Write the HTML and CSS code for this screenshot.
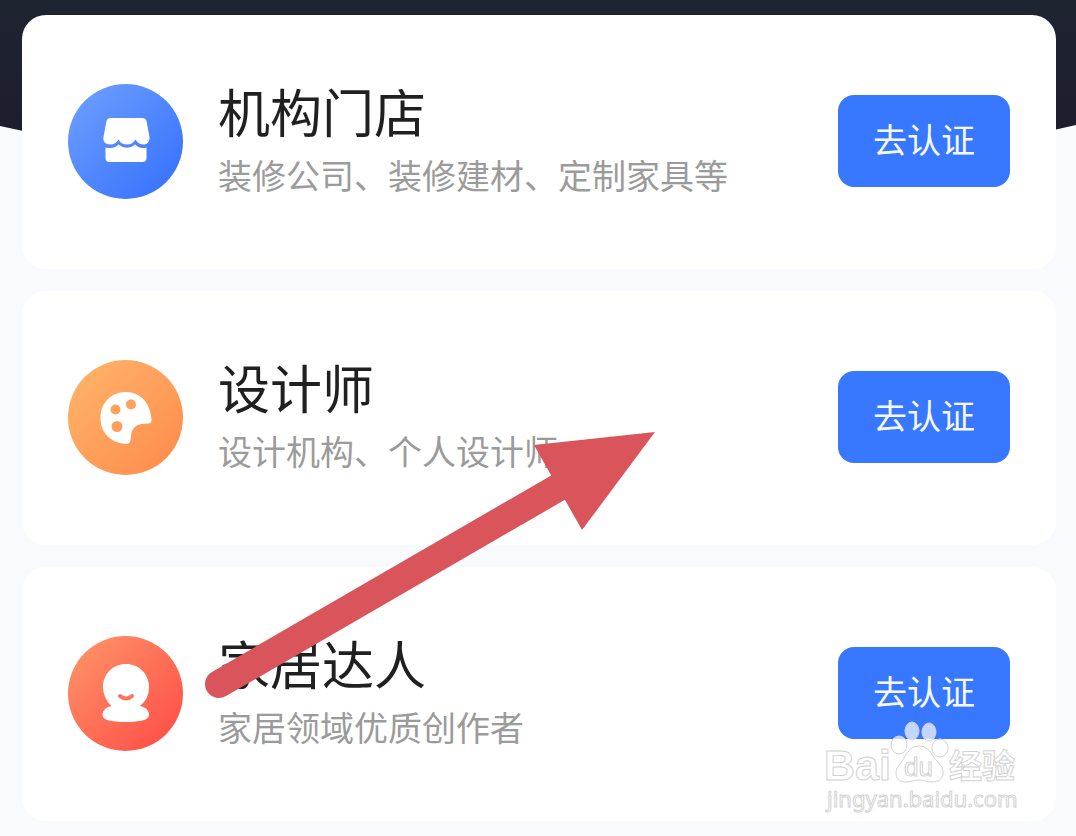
FILE: index.html
```html
<!DOCTYPE html>
<html lang="zh-CN">
<head>
  <meta charset="UTF-8" />
  <meta name="viewport" content="width=device-width, initial-scale=1" />
  <title>选择认证类型</title>
  <link rel="stylesheet" href="styles.css">
</head>
<body>
  <svg class="hero" viewBox="0 0 1076 190" preserveAspectRatio="none" aria-hidden="true">
    <defs>
      <linearGradient id="hero-bg" x1="0" y1="0" x2="0" y2="1">
        <stop offset="0" stop-color="#1f2431" />
        <stop offset="0.7" stop-color="#1d1e2d" />
      </linearGradient>
    </defs>
    <path d="M0 0V126Q538 250 1076 125V0Z" fill="url(#hero-bg)" />
  </svg>

  <main class="lista">
    <section class="card">
      <svg class="icon" viewBox="0 0 115 115" aria-hidden="true">
        <defs>
          <linearGradient id="azul" x1="0" y1="0" x2="1" y2="1">
            <stop offset="0.1" stop-color="#6a9cff" />
            <stop offset="0.9" stop-color="#3873fc" />
          </linearGradient>
        </defs>
        <circle cx="57.5" cy="57.5" r="57.5" fill="url(#azul)" />
        <path fill="#fff" d="M42.5 34H74.5Q77.500 34 78.500 37L81.500 53C82 58 79 60.500 75.500 60.500Q70.500 60.500 67.500 55.500Q64.500 60.500 59 60.500Q53 60.500 50.500 55.500Q47.500 60.500 42.500 60.500C37.500 60.500 34.500 57.500 35.500 53L38.500 37Q39.500 34 42.500 34Z" />
        <path fill="#fff" d="M37.500 63.500Q46 65.500 50.500 60.500Q58.500 67 67.500 60.500Q71.500 65.500 78.500 63.500V74Q78.500 78 74.500 78H41.500Q37.500 78 37.500 74Z" />
      </svg>
      <div class="info">
        <h2>机构门店</h2>
        <p>装修公司、装修建材、定制家具等</p>
      </div>
      <button type="button">去认证</button>
    </section>

    <section class="card">
      <svg class="icon" viewBox="0 0 115 115" aria-hidden="true">
        <defs>
          <linearGradient id="laranja" x1="0" y1="0" x2="1" y2="1">
            <stop offset="0.1" stop-color="#ffb168" />
            <stop offset="0.9" stop-color="#ff8e4e" />
          </linearGradient>
        </defs>
        <circle cx="57.5" cy="57.5" r="57.5" fill="url(#laranja)" />
        <path fill="#fff" fill-rule="evenodd" d="M58 32C73 32 83 44 83.500 60Q83.500 63.500 80 63.500C70 63.500 64 66 63 76L62.500 80Q62 84 58 84C43 83 32.500 73 32.500 58C32.500 43 43 32 58 32ZM42.500 49.500a5 5 0 1 0 10 0a5 5 0 1 0 -10 0ZM58 44.500a5 5 0 1 0 10 0a5 5 0 1 0 -10 0ZM43.500 66.500a5.500 5.500 0 1 0 11 0a5.500 5.500 0 1 0 -11 0Z" />
      </svg>
      <div class="info">
        <h2>设计师</h2>
        <p>设计机构、个人设计师</p>
      </div>
      <button type="button">去认证</button>
    </section>

    <section class="card">
      <svg class="icon" viewBox="0 0 115 115" aria-hidden="true">
        <defs>
          <linearGradient id="vermelho" x1="0" y1="0" x2="1" y2="1">
            <stop offset="0.1" stop-color="#ff8f66" />
            <stop offset="0.9" stop-color="#ff5148" />
          </linearGradient>
        </defs>
        <circle cx="57.5" cy="57.5" r="57.5" fill="url(#vermelho)" />
        <path fill="#fff" d="M58 28C71 28 81 38 81 51Q81 63 72 70Q81 72 81 79C81 84 72 86 58 86C43 86 34.500 84 34.500 79Q34.500 72 43.500 70Q35 62 35 51C35 38 45 28 58 28Z" />
        <path fill="none" stroke="#ff7159" stroke-width="4" stroke-linecap="round" d="M52 60Q58 65 64 60" />
      </svg>
      <div class="info">
        <h2>家居达人</h2>
        <p>家居领域优质创作者</p>
      </div>
      <button type="button">去认证</button>
    </section>
  </main>

  <svg class="seta" viewBox="200 425 460 280" aria-hidden="true">
    <path d="M219 684L566 483" fill="none" stroke="#da555b" stroke-width="28" stroke-linecap="round" />
    <path d="M655 432L582 530L534 445Z" fill="#da555b" />
  </svg>

  <svg class="marca" viewBox="820 715 204 100" role="img" aria-label="Baidu 经验">
    <g class="contorno">
      <text class="bai" x="824" y="780">Bai</text>
      <ellipse cx="899" cy="745" rx="8" ry="9" />
      <ellipse cx="912" cy="731" rx="7" ry="9" />
      <ellipse cx="929" cy="732" rx="7" ry="9" />
      <ellipse cx="940" cy="748" rx="8" ry="9" />
      <path d="M919 746C926 746 930 751 933 756C937 762 944 766 943 774C942 780 938 782 932 782C925 782 925 780 919 780C913 780 911 782 905 782C899 782 896 778 896 773C896 766 902 763 905 756C908 751 912 746 919 746Z" />
      <text class="du" x="904" y="776">du</text>
      <text class="jingyan" x="949" y="778">经验</text>
      <text class="site" x="827" y="807">jingyan.baidu.com</text>
    </g>
  </svg>
</body>
</html>
```

FILE: styles.css
```css
:root {
  --bg: #f9fafd;
  --card: #ffffff;
  --text: #202020;
  --muted: #9b9b9b;
  --button-bg: #3877ff;
  --button-text: #f4faff;
}

* {
  box-sizing: border-box;
}

body {
  position: relative;
  margin: 0;
  min-height: 100vh;
  background-color: var(--bg);
  color: var(--text);
  font-family: "Noto Sans CJK SC", sans-serif;
}

h2,
p {
  margin: 0;
  font-weight: 400;
}

.hero {
  position: absolute;
  top: 0;
  left: 0;
  width: 100%;
  height: 190px;
}

.lista {
  position: relative;
  display: flex;
  flex-direction: column;
  gap: 22px;
  padding: 15px 20px 15px 22px;
}

.card {
  display: flex;
  align-items: center;
  gap: 35px;
  padding: 62px 46px 64px;
  background-color: var(--card);
  border-radius: 24px;
}

.icon {
  flex: none;
  width: 115px;
  height: 115px;
}

.info {
  flex: 1;
  display: flex;
  flex-direction: column;
  gap: 6px;
  padding-bottom: 6px;
}

.info h2 {
  font-size: 52px;
  line-height: 68px;
}

.info p {
  font-size: 34px;
  line-height: 48px;
  color: var(--muted);
}

button {
  flex: none;
  padding: 20px 35px 24px;
  border: none;
  border-radius: 16px;
  background-color: var(--button-bg);
  color: var(--button-text);
  font-family: inherit;
  font-size: 34px;
  line-height: 48px;
  cursor: pointer;
}

.seta {
  position: absolute;
  top: 425px;
  left: 200px;
  width: 460px;
  height: 280px;
  pointer-events: none;
}

.marca {
  position: absolute;
  top: 715px;
  right: 52px;
  width: 204px;
  height: 100px;
  pointer-events: none;
}

.contorno {
  fill: rgba(255, 255, 255, 0.7);
  stroke: #d2d2d2;
  stroke-width: 1px;
}

.bai {
  font: bold 43px "Liberation Sans", sans-serif;
}

.du {
  font: 26px "Liberation Sans", sans-serif;
}

.jingyan {
  font: bold 33px "Noto Sans CJK SC", sans-serif;
}

.site {
  font: 22px "Noto Sans", sans-serif;
}
```
